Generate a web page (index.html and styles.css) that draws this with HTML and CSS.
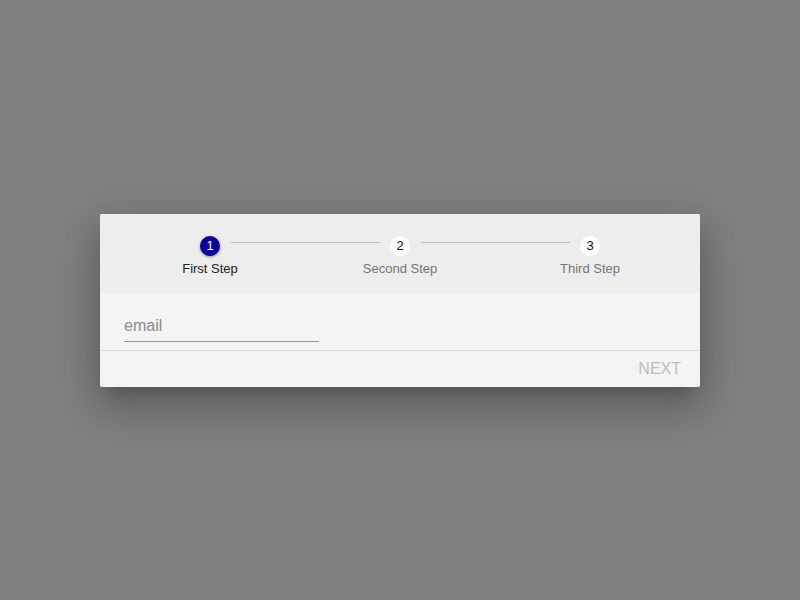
FILE: index.html
```html
<!DOCTYPE html>
<html>
<head>
<meta charset="utf-8">
<link rel="stylesheet" href="styles.css">
</head>
<body>
<div class="overlay">
  <div class="card">
    <div class="stepper">
      <div class="step">
        <div class="track">
          <span class="seg"></span>
          <span class="dot active">1</span>
          <span class="seg line right"></span>
        </div>
        <div class="label active-label">First Step</div>
      </div>
      <div class="step">
        <div class="track">
          <span class="seg line left"></span>
          <span class="dot">2</span>
          <span class="seg line right"></span>
        </div>
        <div class="label">Second Step</div>
      </div>
      <div class="step">
        <div class="track">
          <span class="seg line left"></span>
          <span class="dot">3</span>
          <span class="seg"></span>
        </div>
        <div class="label">Third Step</div>
      </div>
    </div>
    <div class="content">
      <div class="field">email</div>
    </div>
    <div class="actions">
      <span class="next">NEXT</span>
    </div>
  </div>
</div>
</body>
</html>
```
FILE: styles.css
```css
html, body {
  margin: 0;
  padding: 0;
}
body {
  background: #808080;
  font-family: "Liberation Sans", Arial, sans-serif;
}
.overlay {
  height: 100vh;
  display: flex;
  align-items: center;
  justify-content: center;
}
.card {
  width: 600px;
  background: #f4f4f4;
  border-radius: 2px;
  overflow: hidden;
  box-shadow: 0 11px 15px -7px rgba(0,0,0,0.2), 0 24px 38px 3px rgba(0,0,0,0.14), 0 9px 46px 8px rgba(0,0,0,0.12);
}
.stepper {
  background: #ededed;
  height: 80px;
  box-sizing: border-box;
  padding: 22px 15px 0 15px;
  display: flex;
}
.step {
  flex: 1;
  display: flex;
  flex-direction: column;
  align-items: stretch;
}
.track {
  display: flex;
  align-items: center;
  height: 20px;
}
.seg {
  flex: 1 1 0;
  min-width: 0;
  display: flex;
  height: 1px;
  margin-top: -6px;
}
.line::before {
  content: "";
  flex: 1 1 0;
  min-width: 0;
  height: 1px;
  background: #bdbdbd;
}
.line.right::before {
  margin-left: 11px;
}
.line.left::before {
  margin-right: 10px;
}
.dot {
  width: 20px;
  height: 20px;
  border-radius: 50%;
  background: #ffffff;
  color: #111;
  font-size: 13px;
  display: flex;
  align-items: center;
  justify-content: center;
  flex: none;
}
.dot.active {
  background: #0a0099;
  color: #fff;
  box-shadow: 0 1px 3px rgba(0,0,0,0.45);
}
.label {
  text-align: center;
  font-size: 13px;
  color: #757575;
  margin-top: 5px;
  line-height: 16px;
}
.label.active-label {
  color: #222;
}
.content {
  height: 57px;
  box-sizing: border-box;
  padding: 23px 24px 0 24px;
  border-bottom: 1px solid #dcdcdc;
}
.field {
  width: 195px;
  font-size: 16px;
  line-height: 18px;
  color: #8a8a8a;
  padding-bottom: 6px;
  border-bottom: 1px solid #969696;
}
.actions {
  height: 36px;
  display: flex;
  align-items: center;
  justify-content: flex-end;
  padding-right: 19px;
}
.next {
  font-size: 16px;
  color: #bdbdbd;
}
```
